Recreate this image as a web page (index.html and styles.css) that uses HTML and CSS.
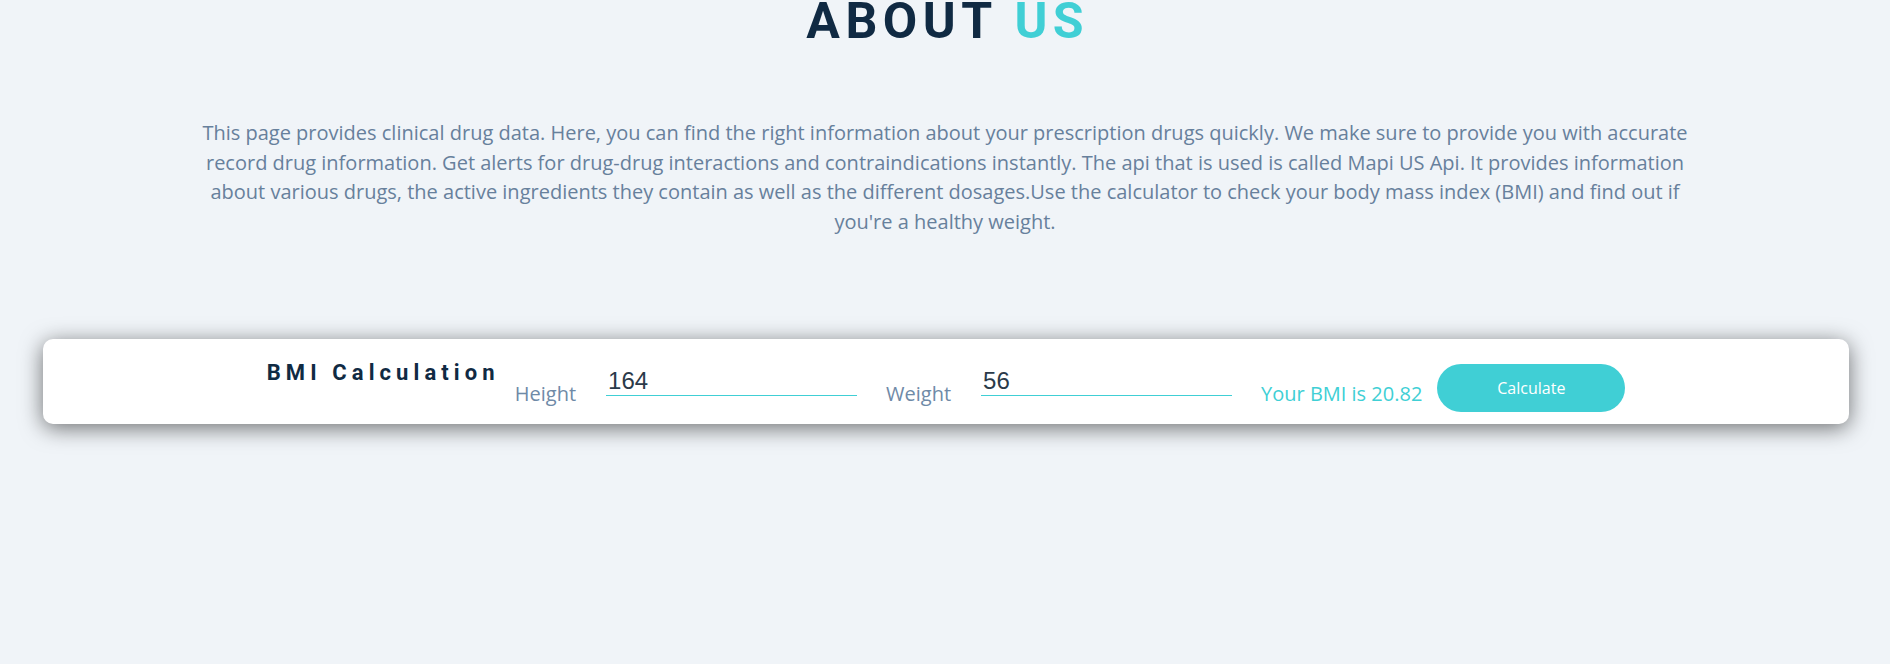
FILE: index.html
```html
<!DOCTYPE html>
<html lang="en">
<head>
<meta charset="utf-8">
<title>About Us</title>
<link rel="stylesheet" href="styles.css">
</head>
<body>
<section class="about">
  <h1 class="about-title">ABOUT <span class="accent">US</span></h1>
  <p class="about-text">This page provides clinical drug data. Here, you can find the right information about your prescription drugs quickly. We make sure to provide you with accurate record drug information. Get alerts for drug-drug interactions and contraindications instantly. The api that is used is called Mapi US Api. It provides information about various drugs, the active ingredients they contain as well as the different dosages.Use the calculator to check your body mass index (BMI) and find out if you're a healthy weight.</p>
</section>
<section class="bmi-card">
  <h3 class="bmi-title">BMI Calculation</h3>
  <div class="field">
    <label class="field-label" for="height">Height</label>
    <input class="field-input" id="height" type="text" value="164">
  </div>
  <div class="field">
    <label class="field-label" for="weight">Weight</label>
    <input class="field-input" id="weight" type="text" value="56">
  </div>
  <p class="bmi-result">Your BMI is 20.82</p>
  <button class="calc-btn" type="button">Calculate</button>
</section>
</body>
</html>
```

FILE: styles.css
```css
html, body {
  margin: 0;
  padding: 0;
}

body {
  background: #f0f4f8;
  font-family: "Open Sans", "Liberation Sans", sans-serif;
  height: 664px;
  overflow: hidden;
}

.about {
  display: flex;
  flex-direction: column;
  align-items: center;
}

.about-title {
  margin: -8px 0 0 0;
  font-family: Roboto, "Liberation Sans", sans-serif;
  font-weight: 700;
  font-size: 50px;
  line-height: normal;
  letter-spacing: 5.5px;
  color: #102a43;
  padding-left: 5.5px;
}

.accent {
  color: #40cfd5;
}

.about-text {
  margin: 68px 0 0 0;
  width: 1500px;
  text-align: center;
  font-size: 20px;
  line-height: 29.7px;
  color: #67809c;
}

.bmi-card {
  box-sizing: border-box;
  height: 85px;
  margin: 102px 41px 0 43px;
  padding-top: 20px;
  background: #ffffff;
  border-radius: 10px;
  box-shadow: 0 4px 22px rgba(0, 0, 0, 0.55);
  display: flex;
  align-items: flex-start;
  justify-content: center;
}

.bmi-title {
  margin: 1px 15px 0 0;
  font-family: Roboto, "Liberation Sans", sans-serif;
  font-weight: 700;
  font-size: 22px;
  line-height: normal;
  letter-spacing: 5.1px;
  color: #102a43;
}

.field {
  display: flex;
  align-items: flex-start;
  gap: 30px;
  margin-right: 29px;
}

.field-label {
  margin-top: 21px;
  font-size: 20px;
  line-height: normal;
  color: #6f8aa7;
}

.field-input {
  margin-top: 9px;
  box-sizing: content-box;
  width: 249px;
  height: 27px;
  padding: 0 0 0 2px;
  border: none;
  border-bottom: 1px solid #40cfd5;
  background: transparent;
  font-family: "Liberation Sans", Arial, sans-serif;
  font-size: 24px;
  color: #2b3a4a;
  outline: none;
}

.bmi-result {
  margin: 21px 15px 0 0;
  font-size: 20px;
  line-height: normal;
  color: #40cfd5;
}

.calc-btn {
  margin-top: 5px;
  width: 188px;
  height: 48px;
  border: none;
  border-radius: 24px;
  background: #40cfd5;
  color: #ffffff;
  font-family: "Open Sans", sans-serif;
  font-size: 16px;
  cursor: pointer;
}
```
